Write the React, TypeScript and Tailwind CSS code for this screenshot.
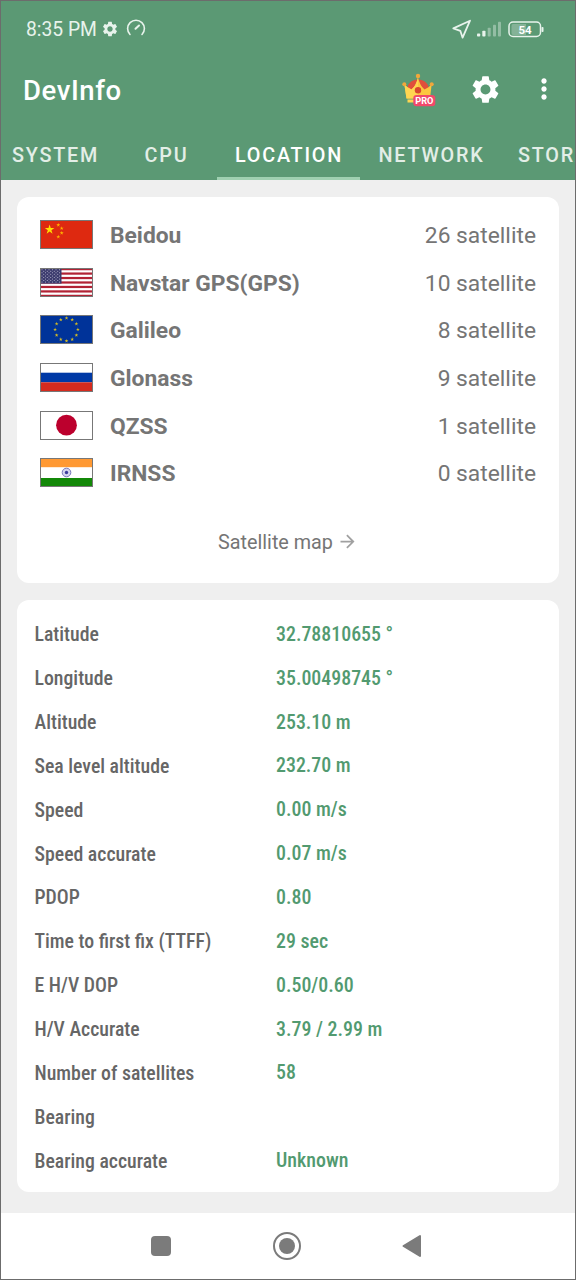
import type { ReactNode } from "react";
import { MdArrowForward, MdMoreVert, MdSettings } from "react-icons/md";

const STAR = "M0-1 .225-.309.951-.309.363.118.588.809 0 .382-.588.809-.363.118-.951-.309-.225-.309Z";

const TABS = [
  { label: "SYSTEM", width: "w-[120px]" },
  { label: "CPU", width: "w-[102px]" },
  { label: "LOCATION", width: "w-[143px]" },
  { label: "NETWORK", width: "w-[142px]" },
  { label: "STORAGE", width: "w-[131px]" },
];

const DETAILS = [
  ["Latitude", "32.78810655 °"],
  ["Longitude", "35.00498745 °"],
  ["Altitude", "253.10 m"],
  ["Sea level altitude", "232.70 m"],
  ["Speed", "0.00 m/s"],
  ["Speed accurate", "0.07 m/s"],
  ["PDOP", "0.80"],
  ["Time to first fix (TTFF)", "29 sec"],
  ["E H/V DOP", "0.50/0.60"],
  ["H/V Accurate", "3.79 / 2.99 m"],
  ["Number of satellites", "58"],
  ["Bearing", ""],
  ["Bearing accurate", "Unknown"],
];

function Flag({ children }: { children: ReactNode }) {
  return (
    <svg viewBox="0 0 53 29" className="w-[53px] h-[29px] shrink-0">
      {children}
      <rect x=".5" y=".5" width="52" height="28" fill="none" stroke="#777" />
    </svg>
  );
}

function ChinaFlag() {
  const small = [[18.3, 5], [21.7, 8.3], [21.7, 13], [18.3, 16.8]];
  return (
    <Flag>
      <rect width="53" height="29" fill="#de2910" />
      <path d={STAR} transform="translate(9.6 9.6) scale(5)" fill="#ffde00" />
      {small.map(([x, y]) => (
        <path key={y} d={STAR} transform={`translate(${x} ${y}) scale(2.1)`} fill="#ffb400" />
      ))}
    </Flag>
  );
}

function UsaFlag() {
  const rows = [0, 1, 2, 3, 4, 5, 6, 7, 8];
  return (
    <Flag>
      <rect width="53" height="29" fill="#fff" />
      {[0, 1, 2, 3, 4, 5, 6].map((i) => (
        <rect key={i} y={(i * 58) / 13} width="53" height={29 / 13} fill="#b22234" />
      ))}
      <rect width="21.5" height="15.6" fill="#3c3b6e" />
      {rows.map((r) =>
        [0, 1, 2, 3, 4, 5].slice(r % 2).map((c) => (
          <circle key={`${r}-${c}`} cx={2 + c * 3.5 - (r % 2) * 1.75} cy={1.8 + r * 1.52} r=".5" fill="#c5c5d8" />
        ))
      )}
    </Flag>
  );
}

function EuFlag() {
  return (
    <Flag>
      <rect width="53" height="29" fill="#003399" />
      {Array.from({ length: 12 }, (_, i) => {
        const a = (i * Math.PI) / 6;
        return (
          <path
            key={i}
            d={STAR}
            transform={`translate(${26.5 + 11.4 * Math.sin(a)} ${14.5 - 11.4 * Math.cos(a)}) scale(2)`}
            fill="#d8bd22"
          />
        );
      })}
    </Flag>
  );
}

function RussiaFlag() {
  return (
    <Flag>
      <rect width="53" height="29" fill="#fff" />
      <rect y="9.7" width="53" height="9.6" fill="#0039a6" />
      <rect y="19.3" width="53" height="9.7" fill="#d52b1e" />
    </Flag>
  );
}

function JapanFlag() {
  return (
    <Flag>
      <rect width="53" height="29" fill="#fff" />
      <circle cx="26.5" cy="14.2" r="10.4" fill="#bc002d" />
    </Flag>
  );
}

function IndiaFlag() {
  return (
    <Flag>
      <rect width="53" height="29" fill="#fff" />
      <rect width="53" height="9.2" fill="#ff9933" />
      <rect y="20" width="53" height="9" fill="#138808" />
      <circle cx="26.5" cy="14.5" r="4.3" fill="#d5d5ee" stroke="#7777bb" />
      <circle cx="26.5" cy="14.5" r="1.7" fill="#3c3c9d" />
    </Flag>
  );
}

const SYSTEMS = [
  { name: "Beidou", count: 26, flag: <ChinaFlag /> },
  { name: "Navstar GPS(GPS)", count: 10, flag: <UsaFlag /> },
  { name: "Galileo", count: 8, flag: <EuFlag /> },
  { name: "Glonass", count: 9, flag: <RussiaFlag /> },
  { name: "QZSS", count: 1, flag: <JapanFlag /> },
  { name: "IRNSS", count: 0, flag: <IndiaFlag /> },
];

function ProCrown() {
  return (
    <svg viewBox="0 0 34 35" className="mb-0.5 mr-[33px] w-[34px] h-[35px]">
      <path d="M4.5 20Q5 8 16 7.5Q27 8 27.5 20Z" fill="#e04f3c" />
      <path d="M2.3 12Q5 16 9.5 17.500Q14 14 16 5.500Q18 14 22.5 17.500Q27 16 29.7 12L28 26.500H4.500Z" fill="#fcc73f" />
      <path d="M2.3 12Q5 16 9.5 17.500Q14 14 16 5.500V26.500H4.500Z" fill="#ffd551" />
      <rect x="5.5" y="27.5" width="22" height="3" fill="#ffd551" />
      <circle cx="16" cy="18.2" r="3.2" fill="#d8472f" />
      <circle cx="16" cy="4" r="2.2" fill="#f2a73b" />
      <circle cx="2.3" cy="12.2" r="2" fill="#f2a73b" />
      <circle cx="29.7" cy="12.2" r="2" fill="#f2a73b" />
      <rect x="11.3" y="23" width="22" height="11.3" rx="3.2" fill="#f2486a" />
      <text x="22.4" y="32" textAnchor="middle" fontSize="9.2" fontWeight="700" fill="#fff">
        PRO
      </text>
    </svg>
  );
}

function StatusBar() {
  return (
    <div className="flex h-[56px] items-center pl-[25px] pr-[30px] text-[#e8f3ec]">
      <span className="pt-0.5 text-[19.3px] leading-6">8:35 PM</span>
      <MdSettings className="ml-1 size-[18px]" />
      <svg viewBox="0 0 20 20" className="ml-[7px] size-5" fill="none" stroke="currentColor" strokeLinecap="round">
        <path d="M4 15.5A8.4 8.4 0 1 1 16 15.5" strokeWidth="1.6" />
        <path d="M9.5 9.8 13 6.5" strokeWidth="2" />
      </svg>
      <svg viewBox="0 0 20 20" className="ml-auto size-5" fill="none" stroke="currentColor" strokeWidth="1.8" strokeLinejoin="round">
        <path d="M18 1.7 1.3 9.4 8.3 11.8 10.6 18.7Z" />
      </svg>
      <svg viewBox="0 0 26 18" className="ml-[4px] w-[26px] h-[18px]" fill="currentColor">
        <rect x="1" y="13.5" width="3.2" height="3" rx=".8" />
        <rect x="6.3" y="10.8" width="3.2" height="5.7" rx=".8" />
        <g opacity=".4">
          <rect x="11.7" y="7.8" width="3" height="8.7" rx=".8" />
          <rect x="17" y="4.8" width="3" height="11.7" rx=".8" />
          <rect x="22" y="1.8" width="3" height="14.7" rx=".8" />
        </g>
      </svg>
      <svg viewBox="0 0 37 17" className="ml-[6px] w-[37px] h-[17px]">
        <path d="M5 3H18V14H5Q3.5 14 3.5 12V5Q3.5 3 5 3Z" fill="#fff" opacity=".25" />
        <rect x="1" y="1" width="31.5" height="14.5" rx="4" fill="none" stroke="currentColor" strokeWidth="1.5" />
        <rect x="33.5" y="6" width="2" height="5" rx=".8" fill="currentColor" />
        <text x="17" y="12.5" textAnchor="middle" fontSize="11.5" fontWeight="700" fill="#fff">54</text>
      </svg>
    </div>
  );
}

export default function App() {
  return (
    <div className="flex h-[1280px] w-[576px] flex-col overflow-hidden border border-[#6c6c6c] bg-[#efefef] font-['Roboto',sans-serif]">
      <header className="h-[179px] shrink-0 overflow-hidden bg-[#5b9974]">
        <StatusBar />
        <div className="flex h-[66px] items-center pl-[22px] text-white">
          <h1 className="pt-0.5 text-[27.5px] font-medium leading-8 tracking-[.6px]">DevInfo</h1>
          <div className="ml-auto flex items-center pr-[15px]">
            <ProCrown />
            <MdSettings className="mr-[26px] mb-0.5 size-[33px]" />
            <MdMoreVert className="mb-0.5 size-8" />
          </div>
        </div>
        <nav className="-ml-1.5 flex h-[57px] w-[643px]">
          {TABS.map((tab) => {
            const active = tab.label === "LOCATION";
            return (
              <div
                key={tab.label}
                className={`${tab.width} flex shrink-0 items-center justify-center border-b-[3px] pl-px pt-[12px] text-[19.8px] font-medium tracking-[1.8px] ${
                  active ? "border-[#9fd0b1] text-white" : "border-transparent text-[#e3eee7]"
                }`}
              >
                {tab.label}
              </div>
            );
          })}
        </nav>
      </header>

      <main className="flex flex-1 flex-col gap-[17px] px-4 pt-[17px]">
        <section className="h-[386px] rounded-[12px] bg-white px-[23px] pt-[14px] text-[#757575]">
          {SYSTEMS.map((s) => (
            <div key={s.name} className="flex h-[47.6px] items-center text-[22.8px]">
              {s.flag}
              <span className="ml-[17px] pt-[3px] font-bold">{s.name}</span>
              <span className="ml-auto pt-[3px]">{s.count} satellite</span>
            </div>
          ))}
          <div className="mt-[29.5px] flex h-[34px] items-center justify-center text-[19.8px]">
            Satellite map
            <MdArrowForward className="mb-1 ml-1 size-[21px] text-[#a0a0a0]" />
          </div>
        </section>

        <section className="h-[592px] rounded-[12px] bg-white pl-[17.5px] pt-[12.4px]">
          {DETAILS.map(([label, value]) => (
            <div key={label} className="flex h-[43.86px] items-center text-[19.8px] font-medium font-stretch-condensed">
              <span className="w-[241.5px] pt-[1.5px] text-[#666]">{label}</span>
              <span className="text-[19.9px] pt-px text-[#529a70]">{value}</span>
            </div>
          ))}
        </section>
      </main>

      <footer className="flex h-[66px] shrink-0 items-center bg-white text-[#7b7b7b]">
        <div className="ml-[150px] size-5 rounded-[4px] bg-current" />
        <div className="ml-[102px] flex size-7 items-center justify-center rounded-full border-2 border-current">
          <div className="size-4 rounded-full bg-current" />
        </div>
        <svg viewBox="0 0 20 24" className="ml-[101px] w-5 h-6" fill="currentColor" stroke="currentColor" strokeWidth="2" strokeLinejoin="round">
          <path d="M18 2V22L1.5 12Z" />
        </svg>
      </footer>
    </div>
  );
}
